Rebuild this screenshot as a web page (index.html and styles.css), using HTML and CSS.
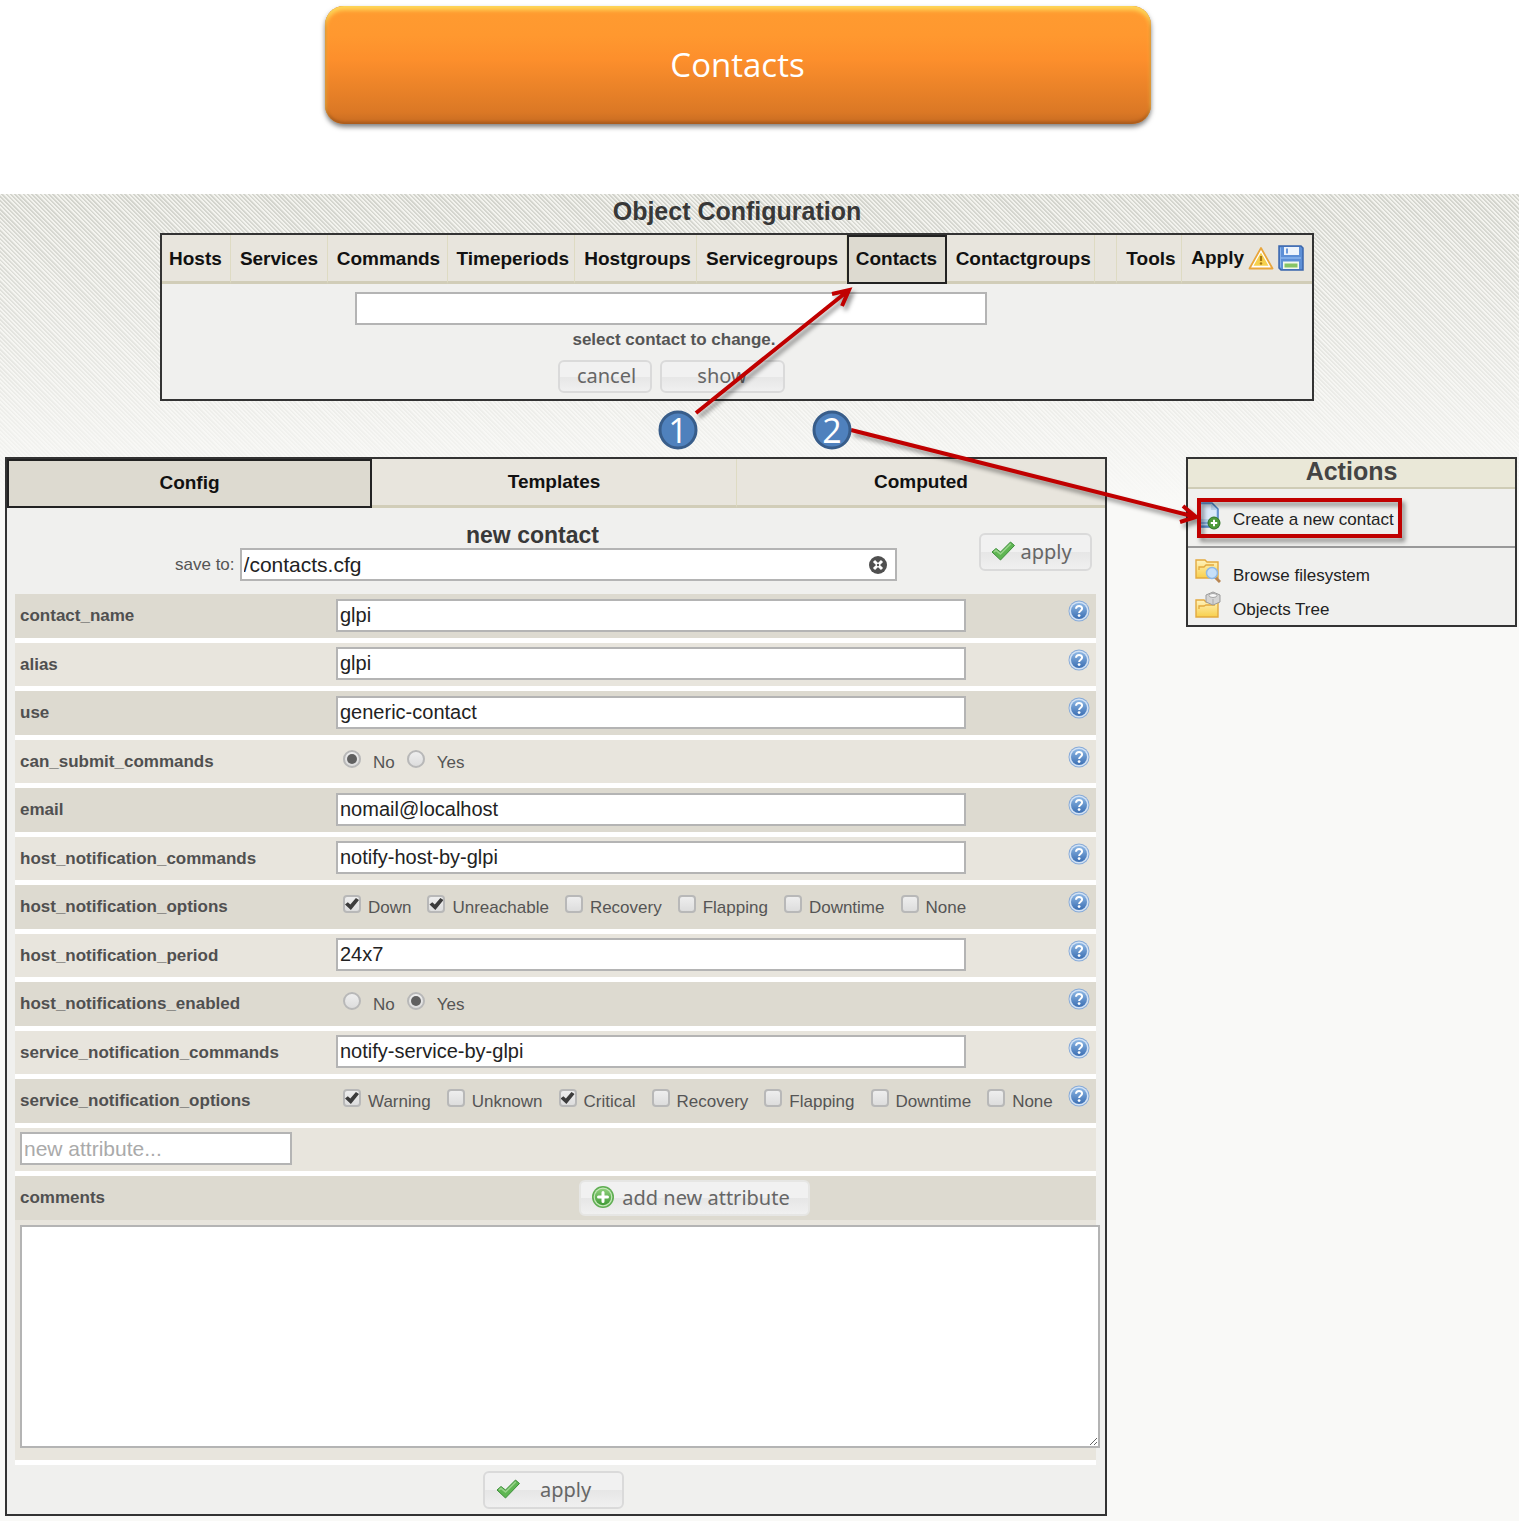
FILE: index.html
```html
<!DOCTYPE html>
<html lang="en">
<head>
<meta charset="utf-8">
<title>Object Configuration - Contacts</title>
<link rel="stylesheet" href="styles.css">
</head>
<body>
<svg class="sprite" aria-hidden="true">
  <defs>
    <linearGradient id="blue" x1="0" y1="0" x2="0" y2="1"><stop offset="0" stop-color="#8db7e4"/><stop offset="1" stop-color="#3c6fb3"/></linearGradient>
    <linearGradient id="green" x1="0" y1="0" x2="0" y2="1"><stop offset="0" stop-color="#8fd07c"/><stop offset="1" stop-color="#3f9a35"/></linearGradient>
    <linearGradient id="folder" x1="0" y1="0" x2="0" y2="1"><stop offset="0" stop-color="#fff3bd"/><stop offset="1" stop-color="#f8cf4b"/></linearGradient>
  </defs>
  <symbol id="help" viewBox="0 0 22 22">
    <circle cx="11" cy="11" r="10.5" fill="#86aad8"/>
    <circle cx="11" cy="11" r="9.6" fill="#d3e2f4"/>
    <circle cx="11" cy="11" r="8" fill="url(#blue)"/>
    <path d="M8 8.8c.1-3.9 6.2-3.7 6.1-.2 0 2-3 2.2-3 4.4" fill="none" stroke="#fff" stroke-width="2"/>
    <circle cx="11.1" cy="15.6" r="1.4" fill="#fff"/>
  </symbol>
  <symbol id="tick" viewBox="0 0 24 20">
    <path d="M1 11 5 7.500l4.500 3.500L19.500 1l4 3.500L9.500 19z" fill="#5fb653" stroke="#3d8e3a" stroke-width="1" stroke-linejoin="round"/>
    <path d="M3 11 5 9.300 9.500 13 19.800 2.800" fill="none" stroke="#98d38a" stroke-width="1.600"/>
  </symbol>
  <symbol id="plus" viewBox="0 0 24 24">
    <circle cx="12" cy="12" r="11" fill="#5fae52"/>
    <circle cx="12" cy="12" r="9.400" fill="#c5e8b9"/>
    <circle cx="12" cy="12" r="8.200" fill="url(#green)"/>
    <path d="M12 7.500v9M7.500 12h9" stroke="#fff" stroke-width="3" stroke-linecap="round"/>
  </symbol>
</svg>

<header class="banner-wrap"><h1 class="banner">Contacts</h1></header>

<div class="stage">
  <section class="top">
    <h2 class="title">Object Configuration</h2>
    <div class="panel picker">
      <nav class="objects">
        <a href="#">Hosts</a><a href="#">Services</a><a href="#">Commands</a><a href="#">Timeperiods</a><a href="#">Hostgroups</a><a href="#">Servicegroups</a><a href="#" class="current">Contacts</a><a href="#">Contactgroups</a><span></span><a href="#">Tools</a><a href="#" class="apply-link">Apply
          <svg width="26" height="24" viewBox="0 0 26 24"><path d="M13 2 24.500 22.500h-23z" fill="#fff" stroke="#e9a63c" stroke-width="1.800" stroke-linejoin="round"/><path d="M13 6.500 20.500 19.800h-15z" fill="#f6d04d"/><path d="M13 10v5" stroke="#a87a14" stroke-width="2.200"/><circle cx="13" cy="17.500" r="1.200" fill="#a87a14"/></svg>
          <svg width="26" height="26" viewBox="0 0 26 26"><path d="M1 1h22l2 2v22H3l-2-2z" fill="#5d8fd6" stroke="#3b67ad" stroke-width="1.500"/><path d="M2.500 2.500v20" stroke="#8db4ea"/><path d="M6 2h15v8H6z" fill="#eef4fc"/><path d="M9 3.500v5" stroke="#5d8fd6" stroke-width="1.800"/><path d="M3 12h20v2H3z" fill="#7eabe8"/><path d="M5 16.500h16V24H5z" fill="#f2f8ee"/><path d="M6.500 18.500h13v4h-13z" fill="#86c465"/></svg></a>
      </nav>
      <form class="picker-form">
        <input type="text" id="pick" class="box">
        <label for="pick">select contact to change.</label>
        <div class="picker-buttons">
          <button type="button" class="btn cancel">cancel</button>
          <button type="button" class="btn show">show</button>
        </div>
      </form>
    </div>
  </section>

  <div class="columns">
    <main class="panel">
      <nav class="tabs"><a href="#" class="current">Config</a><a href="#">Templates</a><a href="#">Computed</a></nav>
      <form class="editor">
        <div class="editor-head">
          <h3>new contact</h3>
          <div class="save">
            <label for="file">save to:</label>
            <div class="file"><input type="text" id="file" class="box large" value="/contacts.cfg"><button type="button" class="clear" aria-label="clear"><svg width="20" height="20" viewBox="0 0 20 20"><circle cx="10" cy="10" r="9" fill="#505050"/><path d="M6 6l8 8M14 6l-8 8" stroke="#fff" stroke-width="3"/><circle cx="10" cy="10" r="1.200" fill="#505050"/></svg></button></div>
          </div>
          <button type="button" class="btn head-apply"><svg width="24" height="20"><use href="#tick"/></svg>apply</button>
        </div>

        <div class="rows">
          <div class="row"><label class="name" for="f1">contact_name</label><div class="field"><input type="text" class="box" id="f1" value="glpi"></div><svg class="help"><use href="#help"/></svg></div>
          <div class="row"><label class="name" for="f2">alias</label><div class="field"><input type="text" class="box" id="f2" value="glpi"></div><svg class="help"><use href="#help"/></svg></div>
          <div class="row"><label class="name" for="f3">use</label><div class="field"><input type="text" class="box" id="f3" value="generic-contact"></div><svg class="help"><use href="#help"/></svg></div>
          <div class="row"><span class="name">can_submit_commands</span><div class="field radios"><label><input type="radio" name="submit" checked>No</label><label><input type="radio" name="submit">Yes</label></div><svg class="help"><use href="#help"/></svg></div>
          <div class="row"><label class="name" for="f5">email</label><div class="field"><input type="text" class="box" id="f5" value="nomail@localhost"></div><svg class="help"><use href="#help"/></svg></div>
          <div class="row"><label class="name" for="f6">host_notification_commands</label><div class="field"><input type="text" class="box" id="f6" value="notify-host-by-glpi"></div><svg class="help"><use href="#help"/></svg></div>
          <div class="row"><span class="name">host_notification_options</span><div class="field checks"><label><input type="checkbox" checked>Down</label><label><input type="checkbox" checked>Unreachable</label><label><input type="checkbox">Recovery</label><label><input type="checkbox">Flapping</label><label><input type="checkbox">Downtime</label><label><input type="checkbox">None</label></div><svg class="help"><use href="#help"/></svg></div>
          <div class="row"><label class="name" for="f8">host_notification_period</label><div class="field"><input type="text" class="box" id="f8" value="24x7"></div><svg class="help"><use href="#help"/></svg></div>
          <div class="row"><span class="name">host_notifications_enabled</span><div class="field radios"><label><input type="radio" name="enabled">No</label><label><input type="radio" name="enabled" checked>Yes</label></div><svg class="help"><use href="#help"/></svg></div>
          <div class="row"><label class="name" for="f10">service_notification_commands</label><div class="field"><input type="text" class="box" id="f10" value="notify-service-by-glpi"></div><svg class="help"><use href="#help"/></svg></div>
          <div class="row"><span class="name">service_notification_options</span><div class="field checks"><label><input type="checkbox" checked>Warning</label><label><input type="checkbox">Unknown</label><label><input type="checkbox" checked>Critical</label><label><input type="checkbox">Recovery</label><label><input type="checkbox">Flapping</label><label><input type="checkbox">Downtime</label><label><input type="checkbox">None</label></div><svg class="help"><use href="#help"/></svg></div>
          <div class="row"><input type="text" class="box large attribute" placeholder="new attribute..." aria-label="new attribute"></div>
        </div>

        <div class="comments-head">
          <label class="name" for="comments">comments</label>
          <button type="button" class="btn add"><svg width="24" height="24"><use href="#plus"/></svg>add new attribute</button>
        </div>
        <div class="comments"><textarea id="comments"></textarea></div>
        <div class="editor-foot"><button type="button" class="btn foot-apply"><svg width="24" height="20"><use href="#tick"/></svg>apply</button></div>
      </form>
    </main>

    <aside class="panel actions">
      <h2>Actions</h2>
      <a href="#" class="create"><svg width="26" height="28" viewBox="0 0 26 28"><path d="M3 1h14l6 6v18H3z" fill="#b9d4f1" stroke="#4a7fc4" stroke-width="1.500"/><path d="M5 3h11v5h5v9H5z" fill="#dbe9f9"/><path d="M4 21h14M4 24h14" stroke="#4a7fc4"/><circle cx="19" cy="21" r="6" fill="#4f9a3b" stroke="#2f7426"/><path d="M19 17.800v6.400M15.800 21h6.400" stroke="#fff" stroke-width="2"/></svg>Create a new contact</a>
      <div class="links">
        <a href="#"><svg width="26" height="26" viewBox="0 0 26 26"><path d="M1 2h9l2 2h11v16H1z" fill="url(#folder)" stroke="#e2a93f" stroke-width="1.400"/><path d="M4 12V9h5l2-2h8" fill="none" stroke="#e2a93f" stroke-width="1.300"/><path d="M20 19l5 5" stroke="#b98652" stroke-width="3"/><circle cx="17" cy="15" r="5.500" fill="#c6dff8" stroke="#8fb8e4" stroke-width="1.500"/></svg>Browse filesystem</a>
        <a href="#"><svg width="26" height="28" viewBox="0 0 26 28"><path d="M1 9h8l2 2h12v15H1z" fill="url(#folder)" stroke="#e2a93f" stroke-width="1.400"/><path d="M4 18v-3h5l2-1h9" fill="none" stroke="#e2a93f" stroke-width="1.300"/><path d="M11 4l7-3 7 3v7l-7 3-7-3z" fill="#d4d4d4" stroke="#9b9b9b"/><ellipse cx="18" cy="4.500" rx="4" ry="2" fill="#f7f7f7" stroke="#a5a5a5"/><path d="M18 8v5" stroke="#aaa"/></svg>Objects Tree</a>
      </div>
    </aside>
  </div>
</div>

<svg class="callouts" width="1519" height="640" viewBox="0 0 1519 640">
  <g class="stroke">
    <path d="M696 413 849 290M832 294l17-4-7 16"/>
    <path d="M851 430 1196 517M1183 506l13 11-16 5"/>
    <rect x="1199" y="500" width="201" height="36"/>
  </g>
  <g class="marks">
    <circle cx="678" cy="430" r="18"/><circle cx="832" cy="430" r="18"/>
    <text x="678" y="443">1</text><text x="832" y="443">2</text>
  </g>
</svg>
</body>
</html>
```
FILE: styles.css
```css
* { box-sizing: border-box; }

body {
  margin: 0;
  position: relative;
  background: #fff;
  color: #555;
  font: 17px/20px "Liberation Sans", Arial, sans-serif;
}

a { color: #222; text-decoration: none; }
h1, h2, h3 { margin: 0; }
svg { flex: none; }
.sprite { position: absolute; width: 0; height: 0; }

.banner-wrap { padding: 6px 44px 70px 0; }

.banner {
  width: 56%;
  margin: 0 auto;
  border-radius: 19px;
  background: linear-gradient(#ff9b30, #ff982f 25%, #fd8f2c 45%, #db7825 90%, #c76b22);
  box-shadow: 0 3px 5px rgba(0, 0, 0, .5), inset 0 4px 4px #ffd95a, inset 0 -2px 3px #a85a1c, inset 0 0 3px #b4621e;
  color: #fff;
  font: 33px/118px "Open Sans", sans-serif;
  text-align: center;
}

.stage {
  padding-bottom: 5px;
  background:
    linear-gradient(rgba(249, 249, 247, 0), #f9f9f7 310px),
    repeating-linear-gradient(45deg, #d2d3cc 0 1px, #f3f3ee 2px 3px);
}

.top { padding-right: 45px; }
.title { color: #383838; font-size: 25px; line-height: 35px; padding-bottom: 4px; text-align: center; }

.panel { border: 2px solid #333; background: #f0f0ee; }
.picker { width: calc(100% - 320px); margin: 0 auto; }

.objects {
  display: grid;
  grid-template-columns: 69fr 97fr 120fr 128fr 122fr 150fr 100fr 149fr 22fr 65fr 130fr;
}

.objects > *, .tabs a {
  height: 49px;
  border-right: 1px solid #dedbc3;
  border-bottom: 3px solid #d1cdb8;
  background: #e8e5dd;
  color: #111;
  font-size: 19px;
  font-weight: bold;
  line-height: 48px;
  white-space: nowrap;
}

.objects > * { padding-left: 9px; }
.objects > :first-child, .objects .current { padding-left: 7px; }
.objects .current, .tabs .current { border: 2px solid #222; background: #dddad0; line-height: 44px; }
.objects .apply-link { display: flex; align-items: center; gap: 4px; border-right: 0; }

.picker-form { display: flex; flex-direction: column; align-items: center; padding: 8px 0 6px; }
.picker-form .box { width: 55%; margin-right: 132px; }
.picker-form label { margin: 5px 126px 10px 0; font-weight: bold; }
.picker-buttons { display: flex; gap: 8px; margin-right: 132px; }

.box {
  display: block;
  height: 33px;
  padding: 0 2px;
  border: 2px solid #b4b4b4;
  border-radius: 0;
  background: #fff;
  color: #222;
  font: 20px "Liberation Sans", Arial, sans-serif;
}

.large { font-size: 21px; }
.box::placeholder { color: #aaa; }

.btn {
  display: flex;
  align-items: center;
  justify-content: center;
  height: 33px;
  padding: 0 0 2px;
  border: 2px solid #dadada;
  border-radius: 6px;
  background: linear-gradient(#f1f1f1 50%, #e6e6e6 50%, #f0f0f0);
  color: #666;
  font: 20px "Noto Sans", sans-serif;
}

.cancel { width: 94px; padding-left: 4px; }
.show { width: 125px; }

.columns {
  display: grid;
  grid-template-columns: 1102fr 331fr;
  gap: 79px;
  align-items: start;
  padding: 56px 2px 0 5px;
}

.tabs { display: grid; grid-template-columns: 365fr 365fr 368fr; text-align: center; }
.tabs a { line-height: 46px; }
.tabs .current { line-height: 43px; }
.tabs a:last-child { border-right: 0; }

.editor { padding: 0 9px 0 8px; }
.editor-head { position: relative; height: 86px; padding-top: 14px; }
.editor-head h3 { margin-right: 46px; color: #383838; font-size: 23px; line-height: 26px; text-align: center; }
.save { display: flex; align-items: center; gap: 5px; padding-left: 160px; }
.file { position: relative; width: 657px; }
.file .box { width: 100%; }
.clear { position: absolute; top: 7px; right: 9px; width: 20px; height: 20px; padding: 0; border: 0; background: none; }
.clear svg { display: block; }
.head-apply { position: absolute; top: 25px; right: 4px; width: 113px; height: 38px; gap: 5px; padding-right: 8px; }

.row {
  display: grid;
  grid-template-columns: 316px 1fr 28px;
  align-items: center;
  height: 48px;
  padding-left: 5px;
  border-bottom: 5px solid #fff;
  background: #e8e5dd;
}

.row:nth-child(odd) { height: 49px; background: #dddad0; }
.name { font-weight: bold; color: #505050; }
.field .box { width: 86%; margin-bottom: 2px; }
.attribute { width: 272px; margin-bottom: 2px; }
.help { width: 22px; height: 22px; align-self: start; margin-top: 6px; }

.checks, .radios { display: flex; padding: 2px 0 0 7px; white-space: nowrap; }
.checks { gap: 16px; }
.radios { gap: 12px; }
.checks label, .radios label { display: flex; align-items: center; }
.checks label { gap: 7px; }
.radios label { gap: 12px; }

input[type="checkbox"], input[type="radio"] {
  appearance: none;
  flex: none;
  display: grid;
  place-items: center;
  width: 18px;
  height: 18px;
  margin: 0 0 8px;
  border: 2px solid #b8b8b8;
  border-radius: 4px;
  background: linear-gradient(#eee, #ddd);
}

input[type="checkbox"]::before, input[type="radio"]::before { content: ""; }
input[type="radio"] { border-radius: 50%; }
input[type="radio"]:checked::before { width: 10px; height: 10px; border-radius: 50%; background: #606060; }
input[type="checkbox"]:checked::before {
  width: 14px;
  height: 12px;
  background: #3c3c3c;
  clip-path: polygon(0 55%, 20% 36%, 38% 55%, 78% 0, 100% 16%, 42% 100%);
}

.comments-head { display: flex; align-items: center; height: 44px; padding-left: 5px; background: #dddad0; }
.comments-head .name { width: 559px; }
.add { width: 231px; height: 36px; gap: 7px; padding-right: 8px; border-color: #e6e6e4; }

.comments { padding: 5px 0 12px 5px; border-bottom: 5px solid #fff; background: #e8e5dd; }
.comments textarea {
  display: block;
  width: calc(100% + 4px);
  height: 223px;
  border: 2px solid #b4b4b4;
  background: #fff;
  font: 20px "Liberation Sans", Arial, sans-serif;
}

.editor-foot { display: flex; padding: 6px 0 5px 468px; }
.foot-apply { width: 141px; height: 38px; gap: 20px; padding-right: 20px; }

.actions h2 {
  height: 30px;
  border-bottom: 2px solid #cfccb6;
  background: #eae8d8;
  color: #444;
  font-size: 25px;
  line-height: 25px;
  text-align: center;
}

.actions a { display: flex; align-items: center; gap: 12px; padding: 4px 0 0 7px; }
.create { height: 59px; border-bottom: 2px solid #999; }
.create svg { margin-bottom: 8px; }
.links { padding-top: 9px; }
.links a { height: 34px; }
.links svg { margin-bottom: 10px; }

/* Step markers and arrows lie over the whole page */
.callouts { position: absolute; top: 0; left: 0; pointer-events: none; }
.stroke { fill: none; stroke: #c00000; stroke-width: 4; filter: drop-shadow(3px 4px 2px rgba(0, 0, 0, .4)); }
.marks circle { fill: #4f81bd; stroke: #385d8a; stroke-width: 3; }
.marks text { fill: #fff; font: 34px "Open Sans", sans-serif; text-anchor: middle; }
```
